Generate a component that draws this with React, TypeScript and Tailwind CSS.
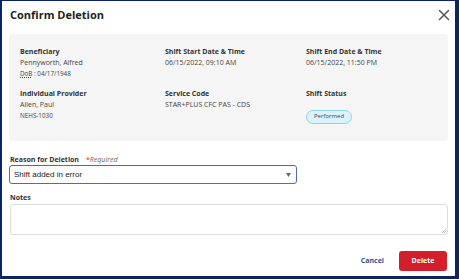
import { X } from 'lucide-react';

const Field = ({ label, children }: { label: string; children: React.ReactNode }) => (
  <div className="flex flex-col">
    <div className="text-[7px] leading-[10px] font-bold text-[#333]">{label}</div>
    {children}
  </div>
);

export default function App() {
  return (
    <div
      className="w-[459px] h-[279px] bg-white border-[#0b2464] border-l-2 border-t border-r-4 border-b-[3px] flex flex-col px-[7px]"
      style={{ fontFamily: '"Open Sans", sans-serif' }}
    >
      <div className="flex items-center justify-between h-[22px] pt-[5px] pl-px">
        <h1 className="text-[11px] leading-[16px] font-bold text-[#222]">Confirm Deletion</h1>
        <X className="w-[18px] h-[18px] text-[#555] mr-[-5px]" strokeWidth={2} />
      </div>

      <div className="mt-[11px] bg-[#f5f5f5] rounded-[3px] h-[107px] pl-[11px] pt-[13px] grid grid-cols-[145px_141px_1fr] gap-y-[10px] content-start">
        <Field label="Beneficiary">
          <div className="text-[7px] leading-[11px] text-[#444]">Pennyworth, Alfred</div>
          <div className="text-[6.3px] leading-[11px] text-[#444]">
            <span className="underline decoration-dotted">DoB</span> : 04/17/1948
          </div>
        </Field>
        <Field label="Shift Start Date & Time">
          <div className="text-[7px] leading-[11px] text-[#444]">06/15/2022, 09:10 AM</div>
        </Field>
        <Field label="Shift End Date & Time">
          <div className="text-[7px] leading-[11px] text-[#444]">06/15/2022, 11:50 PM</div>
        </Field>
        <Field label="Individual Provider">
          <div className="text-[7px] leading-[11px] text-[#444]">Allen, Paul</div>
          <div className="text-[6.3px] leading-[12px] text-[#444]">NEHS-1030</div>
        </Field>
        <Field label="Service Code">
          <div className="text-[7px] leading-[11px] text-[#444]">STAR+PLUS CFC PAS - CDS</div>
        </Field>
        <Field label="Shift Status">
          <div className="mt-[1px]">
            <span className="inline-flex items-center h-[14px] px-[7px] rounded-full bg-[#daf3fc] border border-[#8fd2ee] text-[6px] text-[#444]">
              Performed
            </span>
          </div>
        </Field>
      </div>

      <div className="mt-[14px] flex items-baseline pl-[1px] text-[7px] leading-[10px]">
        <span className="font-bold text-[#333]">Reason for Deletion</span>
        <span className="ml-[7px] text-[#d0262e]">*</span>
        <span className="italic text-[#666]">Required</span>
      </div>
      <div
        className="w-[288px] h-[19px] border-[1.5px] border-[#4b6db3] rounded-[3px] flex items-center justify-between pl-[4px] pr-[5px] text-[8px] text-[#222]"
        style={{ fontFamily: '"Liberation Sans", Arial, sans-serif' }}
      >
        <span>Shift added in error</span>
        <svg width="5" height="4" viewBox="0 0 5 4" className="fill-[#666]">
          <path d="M0 0h5L2.5 4z" />
        </svg>
      </div>

      <div className="mt-[9px] pl-[1px] text-[7px] leading-[10px] font-bold text-[#333]">Notes</div>
      <div className="mt-[1px] ml-[1px] w-[438px] h-[31px] border border-[#ddd] rounded-[3px] relative">
        <svg width="5" height="5" viewBox="0 0 5 5" className="absolute right-[1px] bottom-[1px] stroke-[#aaa]">
          <path d="M1 5L5 1M3 5L5 3" strokeWidth="0.8" />
        </svg>
      </div>

      <div className="mt-[16px] flex items-center justify-end gap-[15px] pr-[1px]">
        <span className="text-[7px] font-bold text-[#2d4fa0]">Cancel</span>
        <button className="w-[48px] h-[20px] rounded-[3px] bg-[#d21f2b] text-white text-[7px] font-bold">Delete</button>
      </div>
    </div>
  );
}
